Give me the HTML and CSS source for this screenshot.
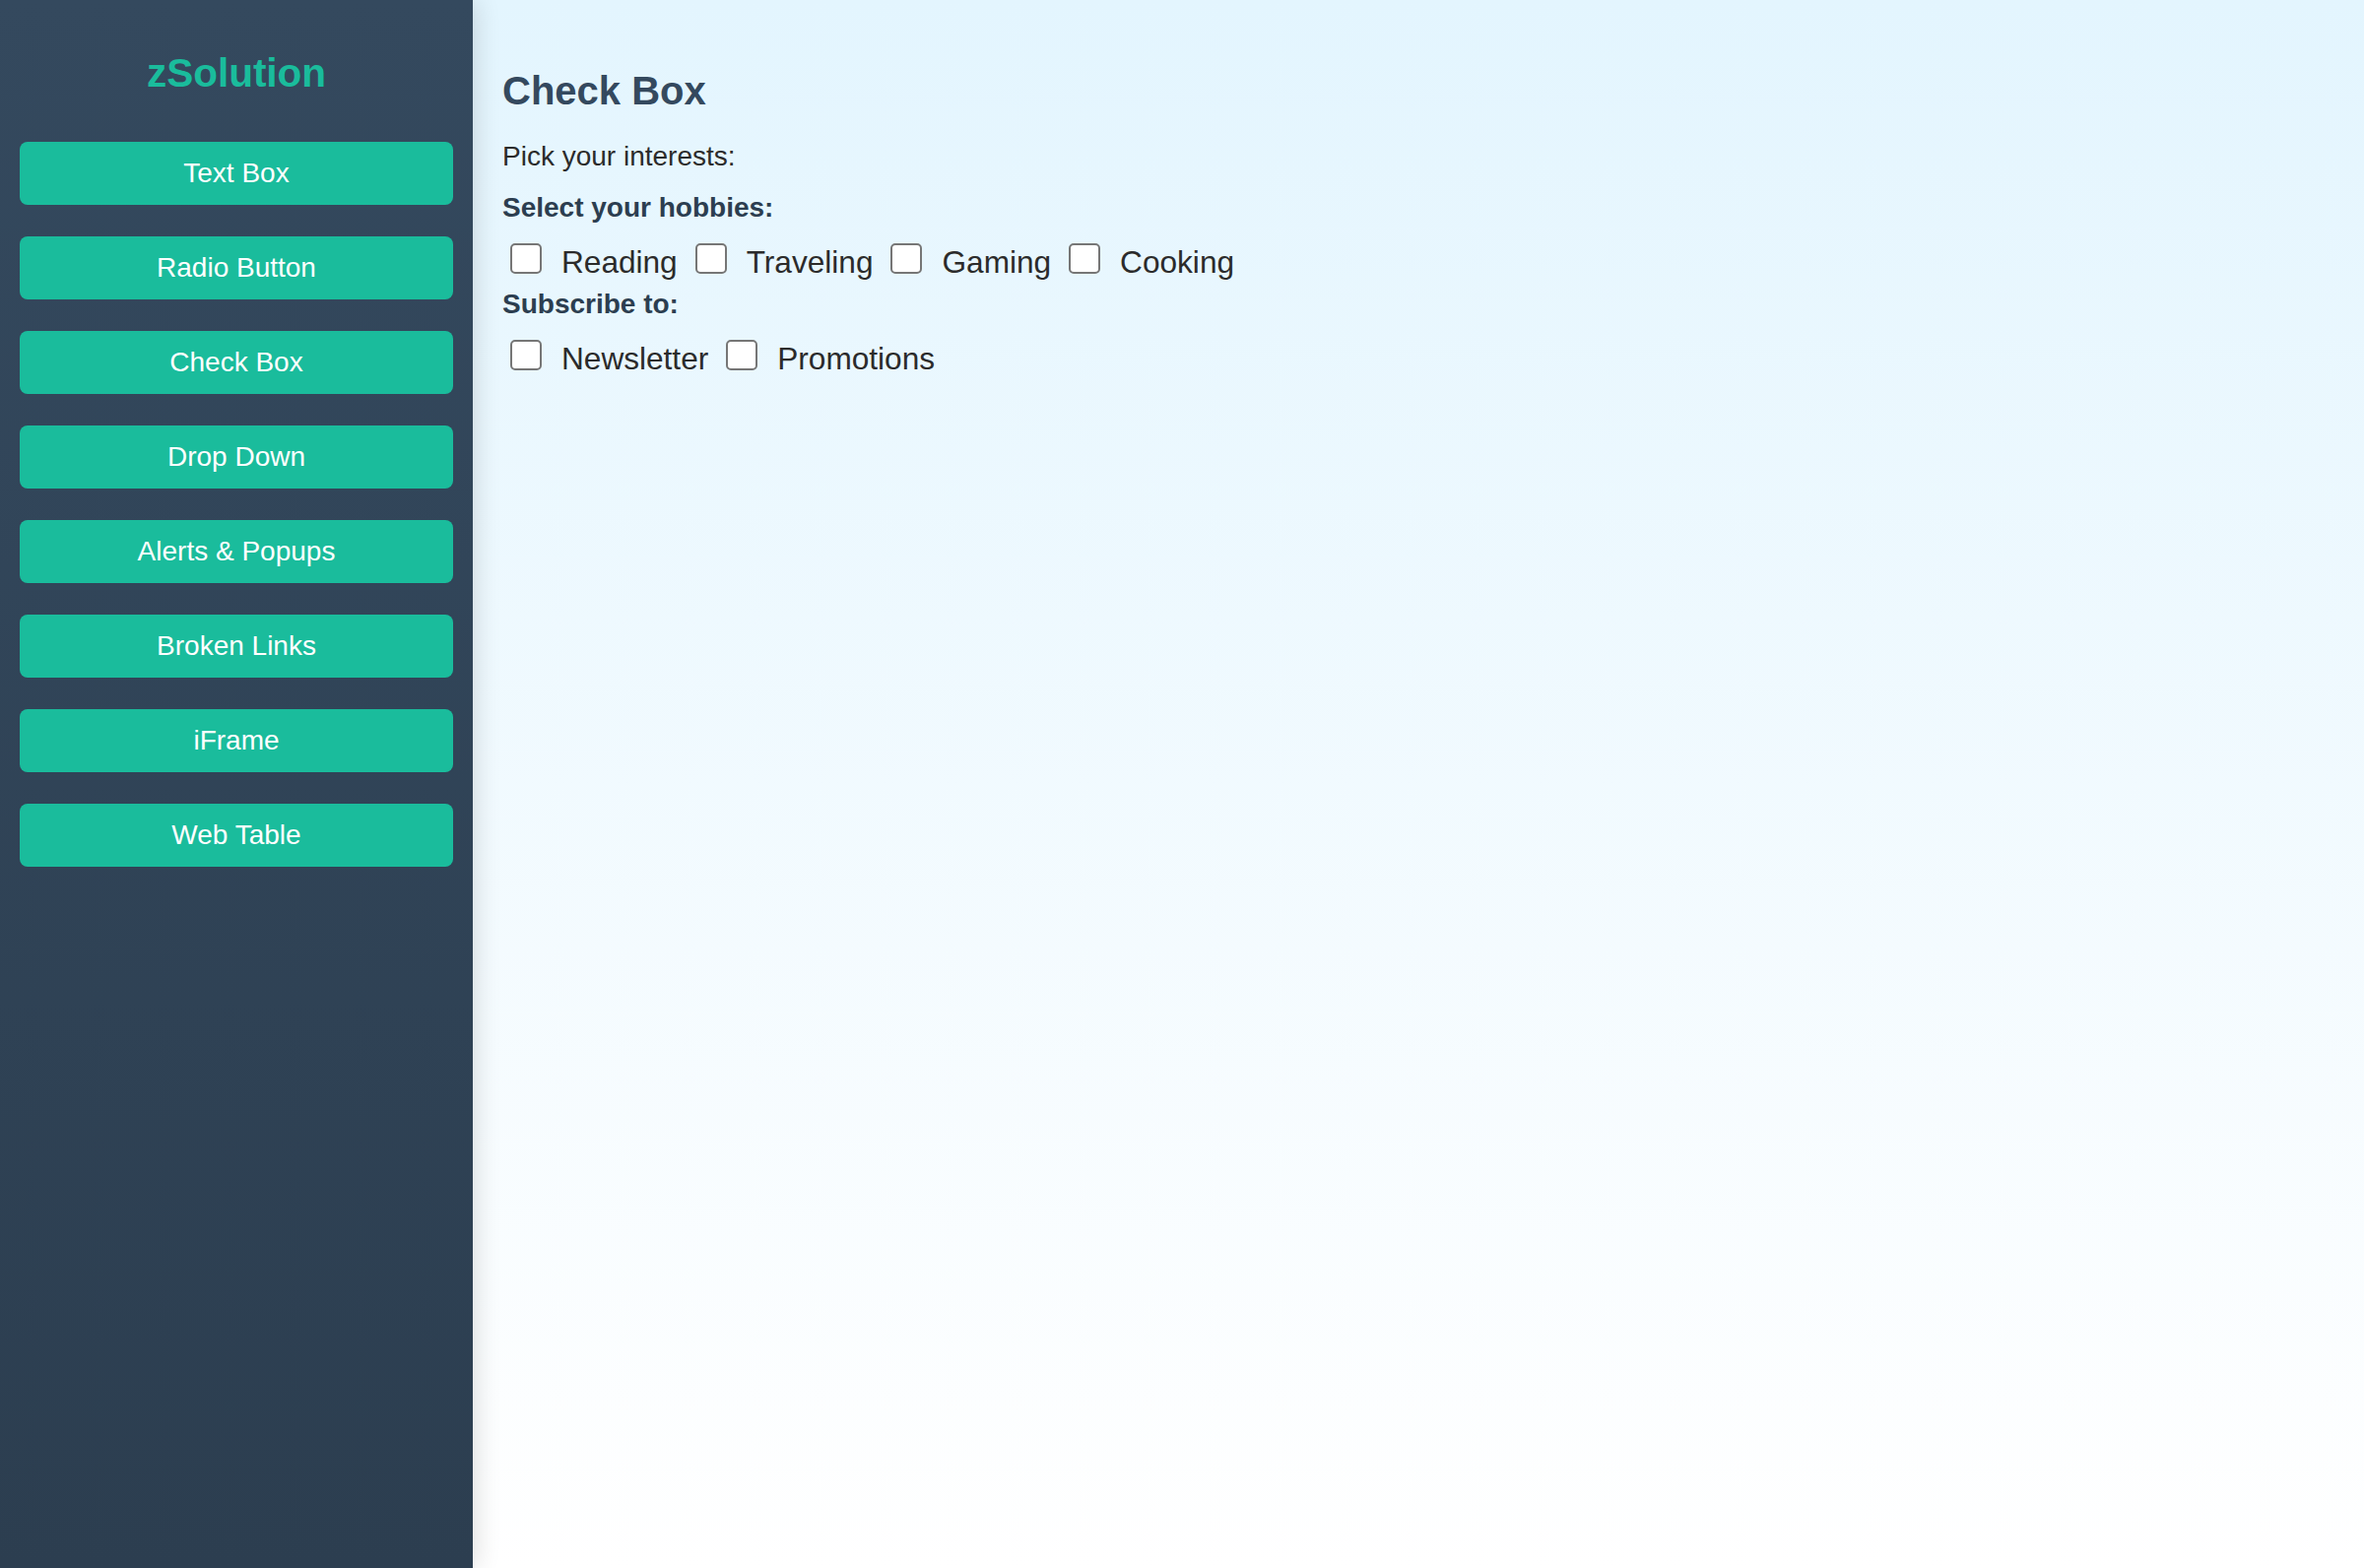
FILE: index.html
```html
<!DOCTYPE html>
<html lang="en">
<head>
<meta charset="utf-8">
<title>zSolution - Check Box</title>
<link rel="stylesheet" href="styles.css">
</head>
<body>
<div class="layout">
  <aside class="sidebar">
    <div class="logo">zSolution</div>
    <nav class="nav">
      <a class="nav-btn" href="#">Text Box</a>
      <a class="nav-btn" href="#">Radio Button</a>
      <a class="nav-btn" href="#">Check Box</a>
      <a class="nav-btn" href="#">Drop Down</a>
      <a class="nav-btn" href="#">Alerts &amp; Popups</a>
      <a class="nav-btn" href="#">Broken Links</a>
      <a class="nav-btn" href="#">iFrame</a>
      <a class="nav-btn" href="#">Web Table</a>
    </nav>
  </aside>
  <main class="main">
    <h2 class="title">Check Box</h2>
    <p class="intro">Pick your interests:</p>
    <div class="group-label">Select your hobbies:</div>
    <div class="opts">
      <input type="checkbox" id="reading"><label for="reading">Reading</label>
      <input type="checkbox" id="traveling"><label for="traveling">Traveling</label>
      <input type="checkbox" id="gaming"><label for="gaming">Gaming</label>
      <input type="checkbox" id="cooking"><label for="cooking">Cooking</label>
    </div>
    <div class="group-label">Subscribe to:</div>
    <div class="opts">
      <input type="checkbox" id="newsletter"><label for="newsletter">Newsletter</label>
      <input type="checkbox" id="promotions"><label for="promotions">Promotions</label>
    </div>
  </main>
</div>
</body>
</html>
```

FILE: styles.css
```css
html, body {
  margin: 0;
  padding: 0;
  height: 100%;
}

body {
  font-family: "Liberation Sans", Arial, Helvetica, sans-serif;
  color: #333333;
}

.layout {
  display: flex;
  min-height: 100vh;
}

.sidebar {
  width: 480px;
  flex: 0 0 480px;
  box-sizing: border-box;
  padding: 50px 20px 0;
  background: linear-gradient(to bottom, #34495e 0%, #2c3e50 100%);
  box-shadow: 4px 0 24px rgba(0, 0, 0, 0.12);
  position: relative;
  z-index: 1;
}

.logo {
  font-size: 40.5px;
  font-weight: bold;
  line-height: 48px;
  color: #1abc9c;
  text-align: center;
  margin-bottom: 46px;
}

.nav {
  display: flex;
  flex-direction: column;
  gap: 32px;
}

.nav-btn {
  display: flex;
  align-items: center;
  justify-content: center;
  height: 64px;
  background: #1abc9c;
  color: #ffffff;
  text-decoration: none;
  font-size: 28px;
  border-radius: 8px;
}

.main {
  flex: 1;
  box-sizing: border-box;
  padding: 68px 30px 0;
  background: linear-gradient(to bottom, #e3f5fe 0%, #ffffff 100%);
}

.title {
  margin: 0 0 27px;
  font-size: 40px;
  line-height: 48px;
  font-weight: bold;
  color: #34495e;
}

.intro {
  margin: 0 0 20px;
  font-size: 28px;
  line-height: 32px;
  color: #2b2b2b;
}

.group-label {
  font-size: 28px;
  line-height: 32px;
  font-weight: bold;
  color: #2c3e50;
  margin-top: 12px;
}

.intro + .group-label {
  margin-top: 0;
}

.opts {
  display: flex;
  align-items: flex-start;
  height: 40px;
  margin-top: 14px;
}

.opts input {
  appearance: none;
  -webkit-appearance: none;
  box-sizing: border-box;
  width: 32px;
  height: 31px;
  margin: 6px 0 0 8px;
  border: 2px solid #767676;
  border-radius: 5px;
  background: #ffffff;
}

.opts label {
  font-size: 31.6px;
  line-height: 36px;
  margin: 7px 10px 0 20px;
  color: #2b2b2b;
}
```
